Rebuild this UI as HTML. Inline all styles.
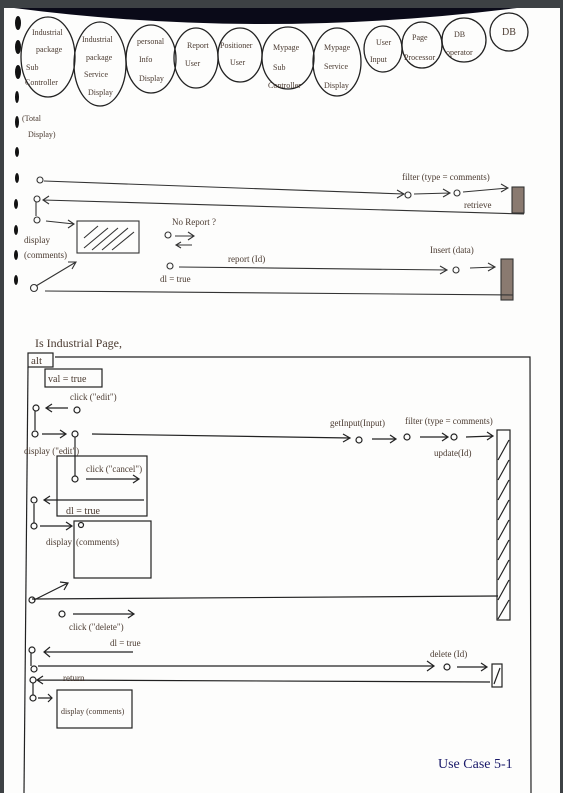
<!DOCTYPE html>
<html><head><meta charset="utf-8"><style>
html,body{margin:0;padding:0;background:#3d4144;}
svg{display:block}
text{font-family:"Liberation Serif",serif;fill:#4a3a30;}
</style></head><body>
<svg width="563" height="793" viewBox="0 0 563 793" xmlns="http://www.w3.org/2000/svg">
<rect x="0" y="0" width="563" height="793" fill="#3d4144"/>
<rect x="4" y="8" width="556" height="785" fill="#fdfdfc"/>
<path d="M14 8 Q260 40 517 8 Z" fill="#0a0a18"/>
<g fill="#111">
<ellipse cx="18" cy="23" rx="3" ry="7"/><ellipse cx="18" cy="47" rx="3" ry="7"/><ellipse cx="18" cy="72" rx="3" ry="7"/><ellipse cx="17" cy="97" rx="2" ry="6"/><ellipse cx="17" cy="122" rx="2" ry="6"/><ellipse cx="17" cy="152" rx="2" ry="5"/><ellipse cx="17" cy="178" rx="2" ry="5"/><ellipse cx="16" cy="204" rx="2" ry="5"/><ellipse cx="16" cy="230" rx="2" ry="5"/><ellipse cx="16" cy="255" rx="2" ry="5"/><ellipse cx="16" cy="280" rx="2" ry="5"/>
</g>
<g fill="none" stroke="#222" stroke-width="1.3">
<ellipse cx="48" cy="57" rx="27" ry="40"/>
<ellipse cx="100" cy="64" rx="26" ry="42"/>
<ellipse cx="151" cy="59" rx="25" ry="34"/>
<ellipse cx="196" cy="58" rx="22" ry="30"/>
<ellipse cx="240" cy="55" rx="22" ry="27"/>
<ellipse cx="288" cy="58" rx="26" ry="31"/>
<ellipse cx="337" cy="62" rx="24" ry="34"/>
<ellipse cx="383" cy="49" rx="19" ry="23"/>
<ellipse cx="422" cy="45" rx="20" ry="23"/>
<ellipse cx="464" cy="40" rx="22" ry="22"/>
<ellipse cx="509" cy="32" rx="19" ry="19"/>
</g>
<g font-size="8">
<text x="32" y="35">Industrial</text><text x="36" y="52">package</text><text x="26" y="70">Sub</text><text x="25" y="85">Controller</text>
<text x="82" y="42">Industrial</text><text x="86" y="60">package</text><text x="84" y="77">Service</text><text x="88" y="95">Display</text>
<text x="137" y="44">personal</text><text x="139" y="62">Info</text><text x="139" y="81">Display</text>
<text x="187" y="48">Report</text><text x="185" y="66">User</text>
<text x="220" y="48">Positioner</text><text x="230" y="65">User</text>
<text x="273" y="50">Mypage</text><text x="273" y="70">Sub</text><text x="268" y="88">Controller</text>
<text x="324" y="50">Mypage</text><text x="324" y="69">Service</text><text x="324" y="88">Display</text>
<text x="376" y="45">User</text><text x="370" y="62">Input</text>
<text x="412" y="40">Page</text><text x="404" y="60">Processor</text>
<text x="454" y="37">DB</text><text x="446" y="55">operator</text>
<text x="502" y="35" font-size="10">DB</text>
<text x="22" y="121">(Total</text><text x="28" y="137">Display)</text>
</g>
<g fill="none" stroke="#333" stroke-width="1.1">
<circle cx="40" cy="180" r="3"/>
<path d="M44 181 L404 194 M397 190 L404 194 L397 198"/>
<circle cx="408" cy="195" r="3"/><path d="M414 194 L450 193 M443 189 L450 193 L443 197"/>
<circle cx="457" cy="193" r="3"/><path d="M463 192 L508 188 M501 184 L508 188 L501 192"/>
<rect x="512" y="187" width="12" height="26" fill="#8a7a70"/>
<path d="M524 214 L43 200 M49 196 L43 200 L49 204"/><circle cx="37" cy="199" r="3"/>
<path d="M36 202 L36 216"/><circle cx="37" cy="220" r="3"/>
<path d="M46 221 L74 224 M68 220 L74 224 L68 228"/>
<rect x="77" y="221" width="62" height="32"/>
<path d="M84 238 L98 226 M84 248 L108 228 M92 250 L118 228 M102 250 L128 228 M112 250 L134 232"/>
<circle cx="168" cy="235" r="3"/><path d="M175 236 L194 236 M188 232 L194 236 L188 240"/>
<path d="M192 245 L176 245 M181 242 L176 245 L181 248"/>
<circle cx="170" cy="266" r="3"/><path d="M179 267 L447 270 M440 266 L447 270 L440 274"/>
<circle cx="456" cy="270" r="3"/><path d="M470 268 L495 267 M488 263 L495 267 L488 271"/>
<rect x="501" y="259" width="12" height="41" fill="#8a7a70"/>
<circle cx="34" cy="288" r="3.5"/><path d="M36 286 L76 262 M68 262 L76 262 L72 269"/>
<path d="M45 291 L513 295"/>
</g>
<g font-size="9">
<text x="402" y="180">filter (type = comments)</text>
<text x="464" y="208">retrieve</text>
<text x="172" y="225">No Report ?</text>
<text x="228" y="262">report (Id)</text>
<text x="430" y="253">Insert (data)</text>
<text x="24" y="243">display</text><text x="24" y="258">(comments)</text>
<text x="160" y="282">dl = true</text>
<text x="35" y="347" font-size="12">Is Industrial Page,</text>
</g>
<g fill="none" stroke="#222" stroke-width="1.2">
<rect x="28" y="353" width="25" height="14"/>
<path d="M55 357 L530 357 L531 793"/>
<path d="M28 367 L24 793"/>
<rect x="45" y="369" width="57" height="18"/>
<circle cx="36" cy="408" r="3"/><path d="M68 408 L46 408 M52 404 L46 408 L52 412"/><circle cx="77" cy="410" r="3"/>
<path d="M35 411 L35 430"/>
<circle cx="35" cy="434" r="3"/><path d="M42 434 L66 434 M60 430 L66 434 L60 438"/><circle cx="75" cy="434" r="3"/>
<path d="M92 434 L350 438 M343 434 L350 438 L343 442"/>
<circle cx="359" cy="440" r="3"/><path d="M372 439 L396 439 M390 435 L396 439 L390 443"/>
<circle cx="407" cy="437" r="3"/><path d="M420 437 L448 437 M442 433 L448 437 L442 441"/>
<circle cx="454" cy="437" r="3"/><path d="M466 437 L493 436 M487 432 L493 436 L487 440"/>
<rect x="497" y="430" width="13" height="190"/>
<path d="M498 619 L509 600 M498 600 L509 580 M498 580 L509 560 M498 560 L509 540 M498 540 L509 520 M498 520 L509 500 M498 500 L509 480 M498 480 L509 460 M498 460 L509 440"/>
<rect x="57" y="456" width="90" height="60"/>
<path d="M75 437 L75 476"/><circle cx="75" cy="479" r="3"/>
<path d="M86 479 L139 479 M133 475 L139 479 L133 483"/>
<circle cx="34" cy="500" r="3"/><path d="M144 500 L44 500 M50 496 L44 500 L50 504"/>
<path d="M34 504 L34 523"/><circle cx="34" cy="526" r="3"/>
<path d="M40 526 L72 526 M66 522 L72 526 L66 530"/>
<rect x="74" y="521" width="77" height="57"/><circle cx="81" cy="525" r="2.5"/>
<path d="M34 600 L68 583 M60 582 L68 583 L64 590"/><circle cx="32" cy="600" r="3"/>
<path d="M32 599 L498 596"/>
<circle cx="62" cy="614" r="3"/><path d="M73 614 L134 614 M128 610 L134 614 L128 618"/>
<circle cx="32" cy="650" r="3"/><path d="M133 652 L44 652 M50 647 L44 652 L50 657"/>
<path d="M31 653 L31 666"/><circle cx="34" cy="669" r="3"/>
<path d="M38 666 L434 666 M427 661 L434 666 L427 671"/>
<circle cx="447" cy="667" r="3"/><path d="M457 667 L487 667 M481 663 L487 667 L481 671"/>
<rect x="492" y="664" width="10" height="23"/><path d="M494 684 L500 668"/>
<path d="M490 682 L37 680 M43 676 L37 680 L43 684"/><circle cx="33" cy="680" r="3"/>
<path d="M33 683 L33 695"/><circle cx="33" cy="698" r="3"/>
<path d="M38 698 L52 698 M48 694 L52 698 L48 702"/>
<rect x="57" y="690" width="75" height="38"/>
</g>
<g font-size="9">
<text x="31" y="364" font-size="11">alt</text>
<text x="48" y="382" font-size="10">val = true</text>
<text x="70" y="400">click ("edit")</text>
<text x="330" y="426">getInput(Input)</text>
<text x="405" y="424">filter (type = comments)</text>
<text x="434" y="456">update(Id)</text>
<text x="24" y="454">display ("edit")</text>
<text x="86" y="472">click ("cancel")</text>
<text x="66" y="514" font-size="10">dl = true</text>
<text x="46" y="545">display</text><text x="76" y="545">(comments)</text>
<text x="69" y="630">click ("delete")</text>
<text x="110" y="646">dl = true</text>
<text x="430" y="657">delete (Id)</text>
<text x="63" y="681">return</text>
<text x="61" y="714" font-size="8">display (comments)</text>
<text x="438" y="768" font-size="14" style="fill:#1a1a6a">Use Case 5-1</text>
</g>
</svg>
</body></html>
